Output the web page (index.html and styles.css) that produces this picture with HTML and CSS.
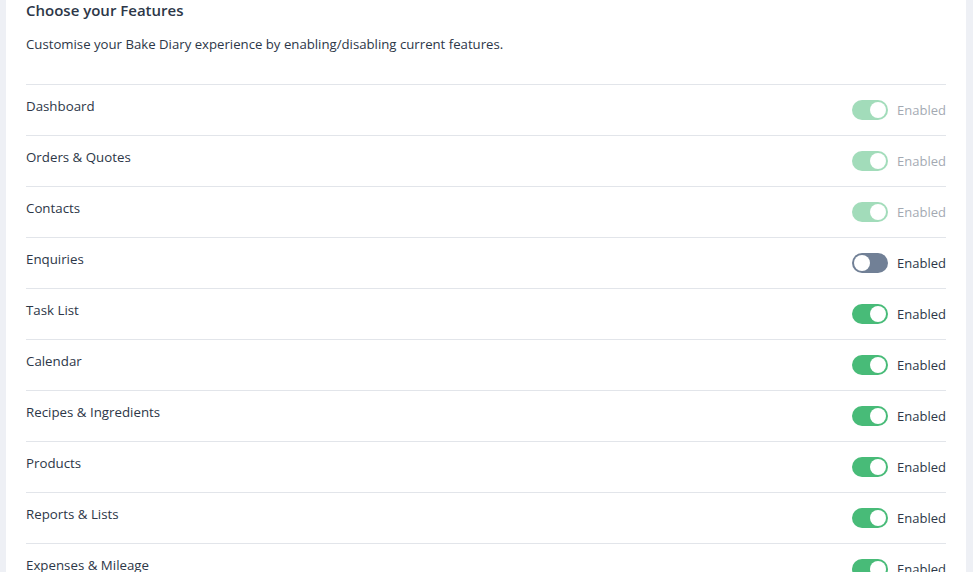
FILE: index.html
```html
<!DOCTYPE html>
<html>
<head>
<meta charset="utf-8">
<link rel="stylesheet" href="styles.css">
</head>
<body>
<div class="page">
  <div class="card">
    <h2 class="title">Choose your Features</h2>
    <p class="subtitle">Customise your Bake Diary experience by enabling/disabling current features.</p>
    <ul class="features">
      <li class="row"><span class="label">Dashboard</span><span class="ctrl disabled"><span class="toggle on"><span class="knob"></span></span><span class="state">Enabled</span></span></li>
      <li class="row"><span class="label">Orders &amp; Quotes</span><span class="ctrl disabled"><span class="toggle on"><span class="knob"></span></span><span class="state">Enabled</span></span></li>
      <li class="row"><span class="label">Contacts</span><span class="ctrl disabled"><span class="toggle on"><span class="knob"></span></span><span class="state">Enabled</span></span></li>
      <li class="row"><span class="label">Enquiries</span><span class="ctrl"><span class="toggle off"><span class="knob"></span></span><span class="state">Enabled</span></span></li>
      <li class="row"><span class="label">Task List</span><span class="ctrl"><span class="toggle on"><span class="knob"></span></span><span class="state">Enabled</span></span></li>
      <li class="row"><span class="label">Calendar</span><span class="ctrl"><span class="toggle on"><span class="knob"></span></span><span class="state">Enabled</span></span></li>
      <li class="row"><span class="label">Recipes &amp; Ingredients</span><span class="ctrl"><span class="toggle on"><span class="knob"></span></span><span class="state">Enabled</span></span></li>
      <li class="row"><span class="label">Products</span><span class="ctrl"><span class="toggle on"><span class="knob"></span></span><span class="state">Enabled</span></span></li>
      <li class="row"><span class="label">Reports &amp; Lists</span><span class="ctrl"><span class="toggle on"><span class="knob"></span></span><span class="state">Enabled</span></span></li>
      <li class="row"><span class="label">Expenses &amp; Mileage</span><span class="ctrl"><span class="toggle on"><span class="knob"></span></span><span class="state">Enabled</span></span></li>
    </ul>
  </div>
</div>
</body>
</html>
```
FILE: styles.css
```css
html, body {
  margin: 0;
  padding: 0;
  background: #eef0f5;
  height: 100%;
  overflow: hidden;
}
body {
  font-family: "Open Sans", "Noto Sans", sans-serif;
  color: #2d3748;
}
.page {
  padding: 0 7px 0 6px;
}
.card {
  background: #fff;
  padding: 0 20px 40px 20px;
  min-height: 700px;
}
.title {
  margin: 0;
  padding-top: 0;
  font-size: 15px;
  font-weight: 600;
  line-height: 20px;
  color: #2d3748;
}
.subtitle {
  margin: 14px 0 0 0;
  font-size: 13.2px;
  line-height: 20px;
  color: #2d3748;
}
.features {
  list-style: none;
  margin: 30px 0 0 0;
  padding: 0;
}
.row {
  display: flex;
  justify-content: space-between;
  align-items: flex-start;
  border-top: 1px solid #e2e5ea;
  padding: 15px 0;
  height: 20px;
}
.label {
  font-size: 13.3px;
  line-height: 20px;
  margin-top: -4px;
}
.ctrl {
  display: flex;
  align-items: center;
  gap: 9px;
}
.ctrl.disabled {
  opacity: 0.5;
}
.toggle {
  position: relative;
  width: 36px;
  height: 20px;
  border-radius: 10px;
  display: block;
}
.toggle.on { background: #48bb78; }
.toggle.off { background: #718096; }
.knob {
  position: absolute;
  top: 2px;
  width: 16px;
  height: 16px;
  border-radius: 50%;
  background: #fff;
}
.toggle.on .knob { right: 2px; }
.toggle.off .knob { left: 2px; }
.state {
  font-size: 13px;
  line-height: 20px;
}
.ctrl.disabled .state {
  color: #4a5568;
}
```
